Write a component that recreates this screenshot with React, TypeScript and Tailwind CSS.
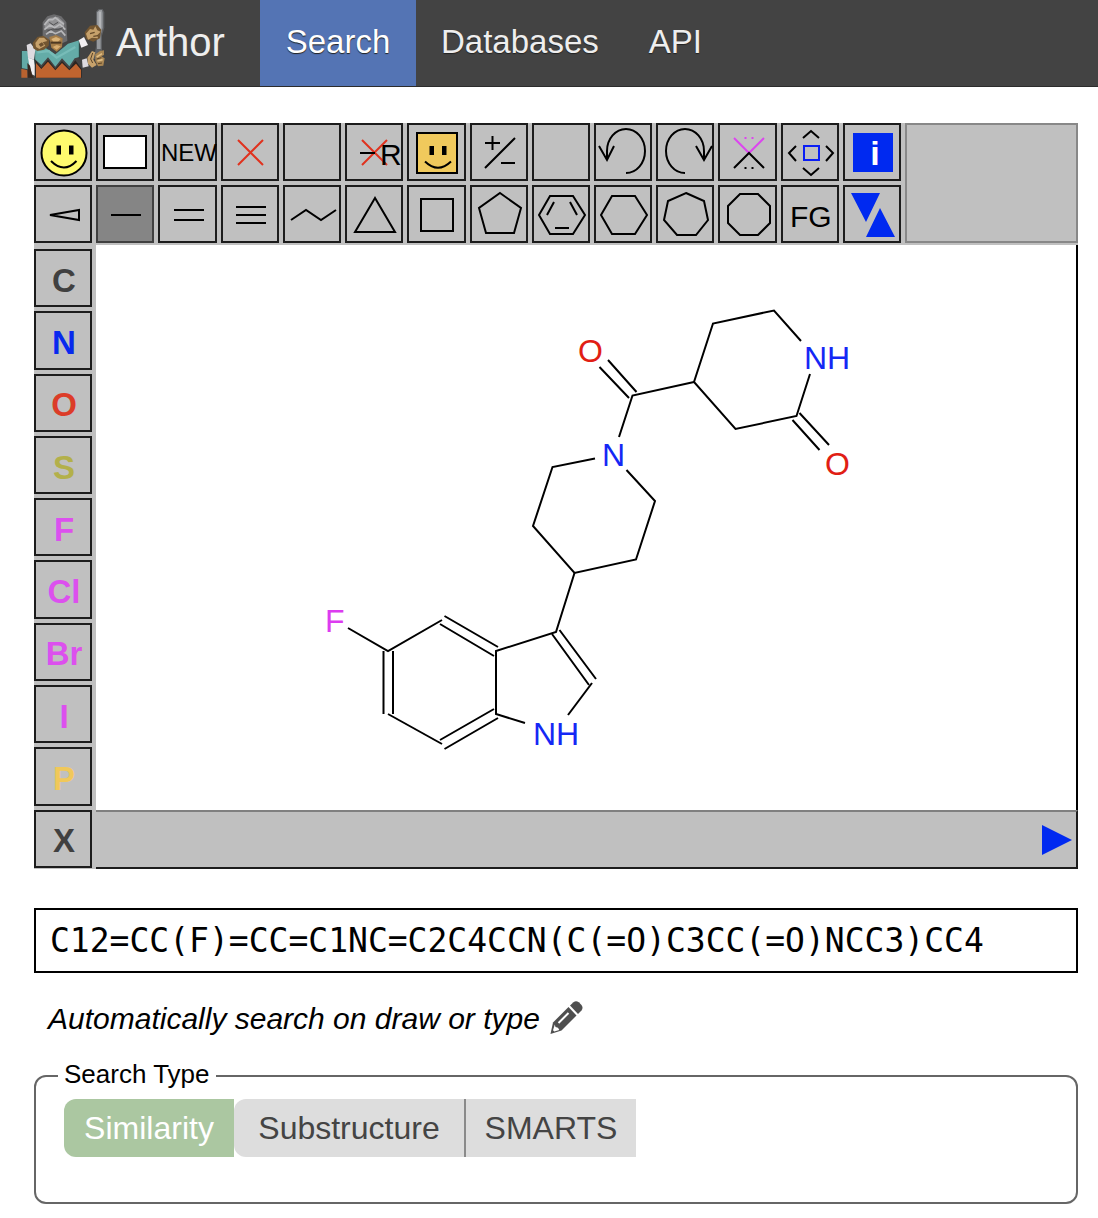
import { useState } from 'react';
import type { ReactNode } from 'react';
import clsx from 'clsx';

interface Tool {
  id: string;
  icon: ReactNode;
}

interface Element {
  symbol: string;
  color: string;
}

const hexagon = '18,11 41,11 53,30 41,49 18,49 7,30';

// Every icon is drawn on a 58x58 board, the size of one cell
const tools: Tool[] = [
  {
    id: 'SMILES',
    icon: (
      <>
        <circle cx="30" cy="30" r="22.5" fill="#fffb6e" />
        <path d="M22.5 22.5h4.5v9h-4.5zM35 22.5h4.5v9h-4.5z" fill="#000" stroke="none" />
        <path d="M17 38Q30 51 42.5 38" />
      </>
    ),
  },
  { id: 'Clear canvas', icon: <rect x="8" y="13" width="42" height="32" fill="#fff" /> },
  { id: 'New molecule', icon: <text x="2" y="38" fontSize="24" fill="#000" stroke="none">NEW</text> },
  { id: 'Delete atom', icon: <path d="M17 17L42 42M42 17L17 42" stroke="#e0321e" /> },
  { id: 'Spare one', icon: null },
  {
    id: 'Delete group',
    icon: (
      <>
        <path d="M17 17L42 42M42 17L17 42" stroke="#e0321e" />
        <path d="M15 30H30" />
        <text x="35" y="42" fontSize="30" fill="#000" stroke="none">R</text>
      </>
    ),
  },
  {
    id: 'Template',
    icon: (
      <>
        <rect x="10" y="10" width="40" height="40" fill="#f0c95c" />
        <path d="M22.5 23h4.5v9h-4.5zM35 23h4.5v9h-4.5z" fill="#000" stroke="none" />
        <path d="M18 38.5Q31 51 44 38.5" />
      </>
    ),
  },
  { id: 'Charge', icon: <path d="M15 20H30M22.5 13V27M15 45L45 15M31 40H45" /> },
  { id: 'Spare two', icon: null },
  { id: 'Undo', icon: <path d="M13 37V28A19 22 0 1 1 32 50M5 23L13 37L20 23" /> },
  { id: 'Redo', icon: <path d="M48 37V28A19 22 0 1 0 29 50M40 23L48 37L56 23" /> },
  {
    id: 'Clean up',
    icon: (
      <>
        <path d="M15 15L30 30L45 15M25.5 15h2M32.5 15h2" stroke="#dc46ee" />
        <path d="M15 45L30 30L45 45M25.5 45h2M32.5 45h2" />
      </>
    ),
  },
  {
    id: 'Move',
    icon: (
      <>
        <rect x="23" y="23" width="15" height="14" stroke="#0a1ef5" />
        <path d="M22 15L30 8L38 15M22 45L30 52L38 45M15 23L8 30L15 38M45 23L52 30L45 38" />
      </>
    ),
  },
  {
    id: 'Info',
    icon: (
      <>
        <rect x="10" y="10" width="40" height="39" fill="#0029f0" stroke="none" />
        <text x="32" y="42" fontSize="34" fontWeight="700" textAnchor="middle" fill="#fff" stroke="none">i</text>
      </>
    ),
  },
  { id: 'Stereo bond', icon: <path d="M16 30L45 25V35Z" /> },
  { id: 'Single bond', icon: <path d="M15 30H45" /> },
  { id: 'Double bond', icon: <path d="M15 25H45M15 35H45" /> },
  { id: 'Triple bond', icon: <path d="M15 22H45M15 30H45M15 38H45" /> },
  { id: 'Chain', icon: <path d="M8 35L23 25L38 35L53 25" /> },
  { id: 'Triangle', icon: <polygon points="30,13 10,47 50,47" /> },
  { id: 'Square', icon: <rect x="14" y="14" width="32" height="32" /> },
  { id: 'Pentagon', icon: <polygon points="30,8 51,23 44,48 16,48 9,23" /> },
  {
    id: 'Benzene',
    icon: (
      <>
        <polygon points={hexagon} />
        <path d="M22 17L15 30M38 17L45 30M23 43H37" />
      </>
    ),
  },
  { id: 'Hexagon', icon: <polygon points={hexagon} /> },
  { id: 'Heptagon', icon: <polygon points="30,8 48,16 52,35 40,50 21,50 8,35 12,16" /> },
  { id: 'Octagon', icon: <polygon points="21,9 39,9 51,21 51,38 39,50 21,50 9,38 9,21" /> },
  { id: 'Functional group', icon: <text x="9" y="42" fontSize="30" fill="#000" stroke="none">FG</text> },
  { id: 'Flip', icon: <path d="M8 8H37L23 37ZM37 23L52 52H23Z" fill="#0029f0" stroke="none" /> },
];

const elements: Element[] = [
  { symbol: 'C', color: 'text-[#404040]' },
  { symbol: 'N', color: 'text-[#0829ee]' },
  { symbol: 'O', color: 'text-[#dc3c28]' },
  { symbol: 'S', color: 'text-[#b3b04a]' },
  { symbol: 'F', color: 'text-[#dc50ee]' },
  { symbol: 'Cl', color: 'text-[#dc50ee]' },
  { symbol: 'Br', color: 'text-[#dc50ee]' },
  { symbol: 'I', color: 'text-[#dc50ee]' },
  { symbol: 'P', color: 'text-[#f0c85a]' },
  { symbol: 'X', color: 'text-[#404040]' },
];

const navItems = ['Search', 'Databases', 'API'];

const searchTypes = [
  { id: 'Similarity', className: 'w-[170px] rounded-l-xl' },
  { id: 'Substructure', className: 'w-[230px] rounded-l-xl' },
  { id: 'SMARTS', className: 'w-[172px] border-l-2 border-[#8a8a8a]' },
];

const Logo = () => (
  <svg width="86" height="72" viewBox="60 22 258 216" className="mt-0.5" aria-hidden="true">
    {/* sword */}
    <path d="M288 36L296 28H308L313 38V84L306 108V150L300 178H282L288 140Z" fill="#5f6164" />
    <path d="M291 38L298 31H306L308 40V84L302 106V148H291Z" fill="#96999d" />
    <path d="M296 36H303V90H296Z" fill="#b4b6b9" />
    {/* trousers and tunic */}
    <path d="M64 207L82 212V234H64Z" fill="#b9622f" />
    <path d="M106 180L124 204L144 180L166 208L186 184L208 208L226 182L245 208V234H106Z" fill="#2c2521" />
    <path d="M108 190L124 208L144 186L166 212L186 190L208 212L228 192L243 210V234H108Z" fill="#c0642f" />
    <path d="M64 154H82L92 176V210L64 205Z" fill="#62aaa6" />
    <path d="M102 148L132 142L166 164L204 132L238 122V172L224 176L208 200L186 176L166 201L144 173L124 196L104 178Z" fill="#64aca8" />
    <path d="M112 158L146 154L170 174L226 142" fill="none" stroke="#77bcb8" strokeWidth="7" />
    <path d="M64 154V207M104 150V192M238 124V176" stroke="#27413f" strokeWidth="3" />
    {/* sleeves */}
    <path d="M80 136L92 131L106 150L102 180L84 174Z" fill="#dedbe0" />
    <path d="M84 174L102 180L104 196V228L96 224L88 196Z" fill="#f1eff2" />
    <path d="M82 190L90 198L96 226L102 234H84Z" fill="#38281f" />
    <path d="M236 122L252 112L264 136L244 144Z" fill="#f1eff2" />
    <path d="M246 180L260 176L266 200L248 204Z" fill="#dedbe0" />
    {/* helmet */}
    <path d="M128 68L142 50L162 44L184 50L199 68L202 124L188 130L168 122L146 122L128 112Z" fill="#6b6b6d" />
    <path d="M134 70L150 54L174 52L192 68V84L134 88Z" fill="#929294" />
    <path d="M133 76L146 60H158L166 54L176 62L192 74M133 90L150 76L164 84L180 74L196 90M138 104L152 94L166 102L184 94L196 108" fill="none" stroke="#b8b8ba" strokeWidth="5" />
    <path d="M148 68L160 76L174 68M142 94L158 88L174 90L188 84" fill="none" stroke="#515153" strokeWidth="3" />
    {/* face */}
    <path d="M148 112L168 106L188 116L186 142L170 156L154 144Z" fill="#a57d48" />
    <path d="M154 118L168 112L182 118L174 126H160Z" fill="#dbb377" />
    <path d="M152 129H184" stroke="#4e3922" strokeWidth="6" />
    <path d="M158 142L170 136L182 140L170 150Z" fill="#d8ad70" />
    {/* hands */}
    <path d="M98 130L112 112L130 108L148 120L146 138L132 150L112 154L100 146Z" fill="#735631" />
    <path d="M106 130L118 114L132 114L142 124L128 128L136 138L118 148L108 142Z" fill="#c6a16b" />
    <path d="M116 134L126 128L132 136L122 142Z" fill="#6d512f" />
    <path d="M254 98L270 78L292 76L304 90L300 116L280 126L258 118Z" fill="#735631" />
    <path d="M258 102L270 88L280 90L286 80L292 92L302 96L292 106L294 116L276 114L264 120Z" fill="#c6a16b" />
    <path d="M270 102L284 98M280 110L294 108" stroke="#644a2a" strokeWidth="4" />
    <path d="M262 174L276 154L286 158L280 180L290 196L276 204L264 192Z" fill="#c6a16b" />
    <path d="M286 164L300 154L312 152V166L304 170L314 176L310 198L294 200L286 184Z" fill="#a98653" />
    <path d="M290 172L306 162M292 184L308 180" stroke="#e0bd83" strokeWidth="5" />
    <path d="M278 160L272 178L278 190M290 178L304 174M294 192L306 190" fill="none" stroke="#5c4428" strokeWidth="3" />
  </svg>
);

const Pencil = () => (
  <svg width="34" height="34" viewBox="0 0 34 34" fill="#4f4f4f" aria-hidden="true">
    <path d="M20 4.5L23.5 1.2Q26 -0.8 28.800 1.300L31.500 4Q33.600 6.800 31.500 9.500L28 13Z" />
    <path d="M18.500 6L26.500 14.500L11.500 29.500L0.500 33L3 21.500Z" />
    <path d="M4.800 23.500L5.500 26L8 26.800L9.300 29L4.300 30.600L3 29.300Z" fill="#fff" />
    <path d="M8.500 22L18.500 12" stroke="#fff" strokeWidth="2" />
  </svg>
);

const Molecule = () => (
  <svg
    className="block h-[565px] w-full"
    viewBox="96 245 980 565"
    fontSize="32"
    role="img"
    aria-label="Drawn molecule"
  >
    <g fill="none" stroke="#000" strokeWidth="2">
      {/* fluoroindole */}
      <path d="M348 628L388 651L442 620" />
      <path d="M444.5 616L498 647M440 624L494 656" />
      <path d="M383.5 651V714M393 651V714" />
      <path d="M388 714L442 744" />
      <path d="M440 740L494 709M444.5 749L498 718" />
      <path d="M525 723L496 714V651L556 632L574.5 573" />
      <path d="M559.5 630L596 679M552 634L589 685" />
      <path d="M592 683L568 715" />
      {/* piperidine */}
      <path d="M626.5 470L655 501L636 559.5L574.5 573L533 526L552.5 467L595 458.5" />
      {/* carbonyl bridge */}
      <path d="M619 437L632.5 395.5L694 382" />
      <path d="M608 360L636.5 392M599.5 367L629 398" />
      {/* piperidinone */}
      <path d="M801 341L774 310.5L713 323.5L694 382L735.5 429L796.5 416L810 374" />
      <path d="M799.5 413L829 445M792.5 420L819.5 450" />
    </g>
    <g fill="#1428f5">
      <text x="533" y="745">NH</text>
      <text x="602" y="466">N</text>
      <text x="804" y="369">NH</text>
    </g>
    <g fill="#e11e14">
      <text x="578" y="362">O</text>
      <text x="825" y="475">O</text>
    </g>
    <text x="325" y="632" fill="#dc3cf0">F</text>
  </svg>
);

const App = () => {
  const [page, setPage] = useState('Search');
  const [tool, setTool] = useState('Single bond');
  const [searchType, setSearchType] = useState('Similarity');
  const [smiles, setSmiles] = useState('C12=CC(F)=CC=C1NC=C2C4CCN(C(=O)C3CC(=O)NCC3)CC4');

  return (
    <div className="min-h-screen bg-white font-['Liberation_Sans',Arial,sans-serif] text-black">
      <header className="flex h-[87px] border-b border-[#2c2c2c] bg-[#434343] text-[#eeeeee]">
        <a href="#home" className="flex w-[260px] items-center gap-2.5 pb-0.5 pl-5 text-[40px]">
          <Logo />
          Arthor
        </a>
        <nav className="flex">
          {navItems.map((item) => (
            <a
              key={item}
              href={`#${item.toLowerCase()}`}
              onClick={() => setPage(item)}
              className={clsx(
                'flex items-center justify-center px-[25px] pb-0.5 text-[33px] text-shadow-[0_1px_1px_#222222]',
                page === item && 'min-w-[156px] bg-[#5474b4] text-white'
              )}
            >
              {item}
            </a>
          ))}
        </nav>
      </header>

      <main className="pt-9 pr-5 pb-3 pl-[34px]">
        {/* Structure editor */}
        <section>
          <div className="grid grid-cols-[repeat(14,34fr)_101fr] grid-rows-[58px_58px] gap-1 bg-[#c0c0c0] pb-0.5">
            {tools.map(({ id, icon }) => (
              <button
                key={id}
                type="button"
                aria-label={id}
                onClick={() => setTool(id)}
                className={clsx(
                  'flex min-w-0 items-center justify-center border-2',
                  tool === id ? 'border-[#404040] bg-[#858585]' : 'border-[#1c1c1c]'
                )}
              >
                <svg width="58" height="58" viewBox="0 0 58 58" className="shrink-0" fill="none" stroke="#000" strokeWidth="2">
                  {icon}
                </svg>
              </button>
            ))}
            <div className="col-start-15 row-span-2 row-start-1 border-2 border-[#888888]" />
          </div>

          <div className="flex">
            <div className="flex w-[62px] shrink-0 flex-col gap-1 bg-[#c0c0c0] pt-1 pr-1 pb-px">
              {elements.map(({ symbol, color }) => (
                <button
                  key={symbol}
                  type="button"
                  onClick={() => setTool(symbol)}
                  className={clsx(
                    'flex-1 border-2 border-[#1c1c1c] pt-1 pl-0.5 text-[33px] leading-none font-bold',
                    color
                  )}
                >
                  {symbol}
                </button>
              ))}
            </div>
            <div className="min-w-0 flex-1">
              <div className="border-r-2 border-black">
                <Molecule />
              </div>
              <div className="flex h-[59px] items-center justify-end border-t-2 border-r-2 border-b-2 border-t-[#808080] border-r-[#1c1c1c] border-b-[#1c1c1c] bg-[#c0c0c0] pr-1">
                <button type="button" aria-label="Open menu">
                  <svg width="30" height="30" viewBox="0 0 30 30" className="block">
                    <path d="M0 0L30 15L0 30Z" fill="#0029f0" />
                  </svg>
                </button>
              </div>
            </div>
          </div>
        </section>

        <input
          type="text"
          aria-label="SMILES"
          value={smiles}
          onChange={(e) => setSmiles(e.target.value)}
          className="mt-[39px] block h-[65px] w-full border-2 border-black px-3.5 font-['DejaVu_Sans_Mono',monospace] text-[33px]"
        />

        <p className="mt-[27px] flex h-9 items-center gap-2.5 pl-3.5 text-[30px] italic">
          Automatically search on draw or type
          <Pencil />
        </p>

        <fieldset className="mt-[25px] rounded-xl border-2 border-[#666666] px-7 pb-[45px]">
          <legend className="-ml-1.5 px-1.5 pb-1 text-[26px] leading-[26px]">Search Type</legend>
          <div className="mt-2 flex text-[32px]">
            {searchTypes.map(({ id, className }) => (
              <button
                key={id}
                type="button"
                aria-pressed={searchType === id}
                onClick={() => setSearchType(id)}
                className={clsx(
                  'h-[58px]',
                  className,
                  searchType === id ? 'bg-[#abc7a1] text-white' : 'bg-[#dddddd] text-[#444444]'
                )}
              >
                {id}
              </button>
            ))}
          </div>
        </fieldset>
      </main>
    </div>
  );
};

export default App;
